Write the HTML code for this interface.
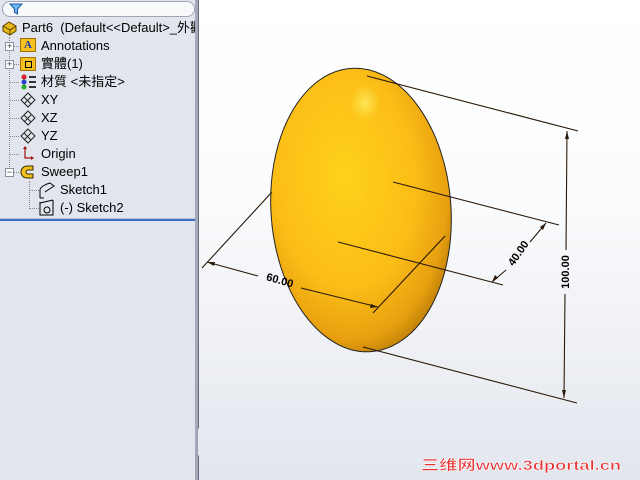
<!DOCTYPE html>
<html><head><meta charset="utf-8"><style>
*{margin:0;padding:0;box-sizing:border-box}
body{width:640px;height:480px;overflow:hidden;position:relative;font-family:"Liberation Sans","Noto Sans CJK TC",sans-serif;font-size:13px;color:#000}
#panel{position:absolute;left:0;top:0;width:197px;height:480px;background:#e2e5ed}
#split{position:absolute;left:195px;top:0;width:4px;height:480px;background:#a4a8b8;border-right:1px solid #6a6e82}
#view{position:absolute;left:199px;top:0;width:441px;height:480px;background:linear-gradient(#ffffff 0%,#fbfcfd 40%,#e3e6ee 100%)}
.search{position:absolute;left:2px;top:1px;width:193px;height:16px;border:1px solid #a0a4b4;border-radius:8px;background:#f8f9fb}
.row{position:absolute;height:18px;line-height:18px;white-space:nowrap}
.dot{position:absolute;border-color:#888;border-style:dotted;border-width:0}
.pm{position:absolute;width:9px;height:9px;border:1px solid #8a8fa0;background:#fff;font-size:9px;line-height:7px;text-align:center;color:#333}
.sep{position:absolute;left:0;top:218px;width:195px;height:3px;border-top:1px solid #b8c4dc;border-bottom:2px solid #3a70c0}
</style></head><body>
<div id="panel">
 <div class="search"><svg width="14" height="14" style="position:absolute;left:6px;top:0" viewBox="0 0 14 14"><path d="M1 2h12l-4.5 5v5l-3-1.5V7z" fill="#6fb6f0" stroke="#1e5aa8" stroke-width="1"/></svg></div>
 <div class="dot" style="left:9px;top:37px;height:136px;border-left-width:1px"></div>
 <div class="dot" style="left:9px;top:46px;width:10px;border-top-width:1px"></div>
 <div class="dot" style="left:9px;top:64px;width:10px;border-top-width:1px"></div>
 <div class="dot" style="left:9px;top:82px;width:10px;border-top-width:1px"></div>
 <div class="dot" style="left:9px;top:100px;width:10px;border-top-width:1px"></div>
 <div class="dot" style="left:9px;top:118px;width:10px;border-top-width:1px"></div>
 <div class="dot" style="left:9px;top:136px;width:10px;border-top-width:1px"></div>
 <div class="dot" style="left:9px;top:154px;width:10px;border-top-width:1px"></div>
 <div class="dot" style="left:9px;top:172px;width:10px;border-top-width:1px"></div>
 <div class="dot" style="left:29px;top:181px;height:28px;border-left-width:1px"></div>
 <div class="dot" style="left:29px;top:190px;width:10px;border-top-width:1px"></div>
 <div class="dot" style="left:29px;top:208px;width:10px;border-top-width:1px"></div>
 <div class="pm" style="left:5px;top:42px">+</div>
 <div class="pm" style="left:5px;top:60px">+</div>
 <div class="pm" style="left:5px;top:168px">−</div>
 <svg style="position:absolute;left:1px;top:20px" width="18" height="16"><path d="M2 6l6-4 7 4v5l-6 4-7-4z" fill="#e8b818" stroke="#5a4000"/><path d="M2 6l7 4 6-4M9 10v5" fill="none" stroke="#5a4000"/></svg>
 <div style="position:absolute;left:20px;top:38px;width:16px;height:14px;background:#f5c020;border:1px solid #a07000"><div style="font:bold 11px 'Liberation Serif',serif;color:#1a3aa8;text-align:center;line-height:12px">A</div></div>
 <div style="position:absolute;left:20px;top:57px;width:16px;height:14px;background:#f5c020;border:1px solid #a07000"><div style="position:absolute;left:4px;top:3px;width:7px;height:7px;border:1px solid #000"></div></div>
 <svg style="position:absolute;left:20px;top:74px" width="18" height="16"><circle cx="4" cy="3" r="2.5" fill="#d22"/><circle cx="4" cy="8" r="2.5" fill="#24c"/><circle cx="4" cy="13" r="2.5" fill="#2a2"/><path d="M9 3h7M9 8h7M9 13h7" stroke="#333" stroke-width="2"/></svg>
 <svg style="position:absolute;left:19px;top:92px" width="18" height="54"><g fill="none" stroke="#222"><path d="M2 8l7-7 7 7-7 7zM5 5l7 7M12 5l-7 7"/><path d="M2 26l7-7 7 7-7 7zM5 23l7 7M12 23l-7 7"/><path d="M2 44l7-7 7 7-7 7zM5 41l7 7M12 41l-7 7"/></g></svg>
 <svg style="position:absolute;left:20px;top:145px" width="16" height="16"><path d="M5 2v11h8" fill="none" stroke="#a01010" stroke-width="1.2"/><path d="M3 4l2-3 2 3M11 11l3 2-3 2" fill="#a01010"/></svg>
 <svg style="position:absolute;left:19px;top:163px" width="18" height="18"><path d="M14 3H8a6 6 0 0 0 0 12h6v-4H9a2 2 0 0 1 0-4h5z" fill="#f0c020" stroke="#3a2a00"/></svg>
 <svg style="position:absolute;left:39px;top:181px" width="18" height="18"><path d="M1 17V9M1 9c0-3 6-6 10-7l4 3-9 6" fill="none" stroke="#000"/><path d="M1 17h4" stroke="#000"/></svg>
 <svg style="position:absolute;left:39px;top:199px" width="18" height="18"><path d="M1 3v13h13V1" fill="none" stroke="#000"/><circle cx="8" cy="11" r="3" fill="none" stroke="#000"/><path d="M1 4l13-3" stroke="#000"/></svg>
 <div class="row" style="left:22px;top:19px">Part6 &nbsp;(Default&lt;&lt;Default&gt;_外觀</div>
 <div class="row" style="left:41px;top:37px">Annotations</div>
 <div class="row" style="left:41px;top:55px">實體(1)</div>
 <div class="row" style="left:41px;top:73px">材質 &lt;未指定&gt;</div>
 <div class="row" style="left:41px;top:91px">XY</div>
 <div class="row" style="left:41px;top:109px">XZ</div>
 <div class="row" style="left:41px;top:127px">YZ</div>
 <div class="row" style="left:41px;top:145px">Origin</div>
 <div class="row" style="left:41px;top:163px">Sweep1</div>
 <div class="row" style="left:60px;top:181px">Sketch1</div>
 <div class="row" style="left:60px;top:199px">(-) Sketch2</div>
 <div class="sep"></div>
</div>
<div id="split"></div>
<div style="position:absolute;left:197px;top:428px;width:9px;height:28px;background:#e6e9f0;border:1px solid #9aa0b4;border-radius:0 3px 3px 0;font-size:6px;line-height:8px;color:#5058a0;text-align:center">◀<br>◀<br>◀</div>
<div id="view"></div>
<svg style="position:absolute;left:0;top:0" width="640" height="480">
 <defs>
  <radialGradient id="g" cx="0.42" cy="0.38" r="0.65">
   <stop offset="0" stop-color="#ffd21c"/><stop offset="0.6" stop-color="#fbbd16"/><stop offset="0.88" stop-color="#e8a010"/><stop offset="1" stop-color="#c08008"/>
  </radialGradient>
  <radialGradient id="h" cx="0.5" cy="0.5" r="0.5"><stop offset="0" stop-color="#fff070" stop-opacity="0.8"/><stop offset="1" stop-color="#ffe040" stop-opacity="0"/></radialGradient>
 </defs>
 <ellipse cx="361" cy="210" rx="90" ry="142" transform="rotate(-4 361 210)" fill="url(#g)" stroke="#222" stroke-width="1"/>
 <ellipse cx="365" cy="103" rx="16" ry="20" fill="url(#h)"/>
 <g stroke="#2a1a08" stroke-width="1.1" fill="none">
  <path d="M367 76L578 131M393 182L559 225M338 242L503 285M363 347L577 403"/>
  <path d="M272 192L202 268M445 236L373 313"/>
  <path d="M207 262L258 276M301 288L378 307"/>
  <path d="M546 223L530 242M506 270L492 282"/>
  <path d="M567 131L566 250M565 294L564 398"/>
 </g>
 <g fill="#2a1a08">
  <path d="M207 262l8 0l-1 4z"/><path d="M378 307l-8 1l1-4z"/>
  <path d="M546 223l-3 7l-3-3z"/><path d="M492 282l3-7l3 3z"/>
  <path d="M567 131l-2 8h4z"/><path d="M564 398l-2-8h4z"/>
 </g>
 <g font-family="Liberation Sans,sans-serif" font-weight="bold" font-size="11" fill="#000" text-anchor="middle">
  <text x="280" y="284" transform="rotate(16 280 280)">60.00</text>
  <text x="518" y="257" transform="rotate(-55 518 253)">40.00</text>
  <text x="565" y="276" transform="rotate(-90 565 272)">100.00</text>
 </g>
 <text x="421" y="470" font-family="Liberation Sans,'Noto Sans CJK SC',sans-serif" font-weight="bold" font-size="14" fill="#e83030" stroke="#fff" stroke-width="0.5" textLength="200" lengthAdjust="spacingAndGlyphs">三维网www.3dportal.cn</text>
</svg>
</body></html>
